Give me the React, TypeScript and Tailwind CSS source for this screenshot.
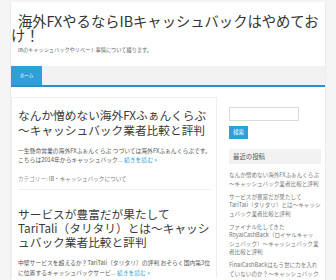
import React from "react";

const ff = { fontFamily: '"Noto Sans CJK JP", "Noto Sans", sans-serif' };

function Post1() {
  return (
    <div className="pt-[10px] pb-[6px] border-b border-[#ececec]">
      <h2 className="text-[11.7px] leading-[14.5px] text-[#3a3a3a] font-normal">
        なんか憎めない海外FXふぁんくらぶ
        <br />
        〜キャッシュバック業者比較と評判
      </h2>
      <p className="mt-[9px] text-[5.8px] leading-[9px] text-[#555] whitespace-nowrap">
        一生懸命営業の海外FXふぁんくらぶ つづいては海外FXふぁんくらぶです。
        <br />
        こちらは2014年からキャッシュバック... <span className="text-[#2a9fd6]">続きを読む »</span>
      </p>
      <p className="mt-[11px] text-[5.6px] leading-[8px] text-[#999]">
        カテゴリー: <span className="text-[#777]">IB・キャッシュバックについて</span>
      </p>
    </div>
  );
}

function Post2() {
  return (
    <div className="pt-[17px]">
      <h2 className="text-[11.7px] leading-[14px] text-[#3a3a3a] font-normal">
        サービスが豊富だが果たして
        <br />
        TariTali（タリタリ）とは〜キャッシ
        <br />
        ュバック業者比較と評判
      </h2>
      <p className="mt-[9px] text-[5.8px] leading-[9.5px] text-[#555] whitespace-nowrap">
        中堅サービスを超えるか？TariTali（タリタリ）の評判 おそらく国内第3位
        <br />
        に位置するキャッシュバックサービ... <span className="text-[#2a9fd6]">続きを読む »</span>
      </p>
    </div>
  );
}

function Sidebar() {
  const items = [
    ["なんか憎めない海外FXふぁんくらぶ", "〜キャッシュバック業者比較と評判"],
    ["サービスが豊富だが果たして", "TariTali（タリタリ）とは〜キャッシ", "ュバック業者比較と評判"],
    ["ファイナル化してきた", "RoyalCashBack（ロイヤルキャッ", "シュバック）〜キャッシュバック業", "者比較と評判"],
    ["FinalCashBackはもう世に力を入れ", "ていないのか？〜キャッシュバック"],
  ];
  return (
    <div className="w-[92px] pt-[10px]">
      <div className="w-[70px] h-[14px] border border-[#dcdcdc] bg-white" />
      <div className="mt-[5px] w-[19px] h-[13px] bg-[#2e9fd8] text-white text-[5.5px] flex items-center justify-center">
        検索
      </div>
      <div className="mt-[10px] h-[15px] bg-[#f2f2f2] text-[6.4px] text-[#555] flex items-center pl-[4px]">
        最近の投稿
      </div>
      <div className="mt-[7px] flex flex-col gap-[4.5px] text-[5.6px] leading-[8.5px] text-[#777] whitespace-nowrap">
        {items.map((lines, i) => (
          <div key={i}>
            {lines.map((l, j) => (
              <div key={j}>{l}</div>
            ))}
          </div>
        ))}
      </div>
    </div>
  );
}

export default function App() {
  return (
    <div className="w-[336px] h-[280px] overflow-hidden bg-[#f5f5f5]" style={ff}>
      <div className="ml-[10px] w-[316px] h-[282px] mt-[2px] bg-white border-x border-[#ebebeb]">
        <div className="pt-[12px]">
          <h1 className="text-[14.3px] leading-[14px] text-[#333] font-normal indent-[7px]">
            海外FXやるならIBキャッシュバックはやめてお
            <br />
            け！
          </h1>
          <p className="mt-[5px] pl-[7px] text-[5.2px] leading-[6px] text-[#666]">
            IBのキャッシュバックやリベート事情について綴ります。
          </p>
        </div>
        <div className="mt-[13px] h-[21px] bg-[#f2f2f2] border-b-2 border-[#2a8fca] flex">
          <div className="w-[31px] bg-[#2e9fd8] text-white text-[4.6px] flex items-center justify-center">
            ホーム
          </div>
        </div>
        <div className="mt-[10px] flex">
          <div className="w-[206px] border-t border-l border-r border-[#efefef] px-[6px]">
            <Post1 />
            <Post2 />
          </div>
          <div className="ml-[12px]">
            <Sidebar />
          </div>
        </div>
      </div>
    </div>
  );
}
